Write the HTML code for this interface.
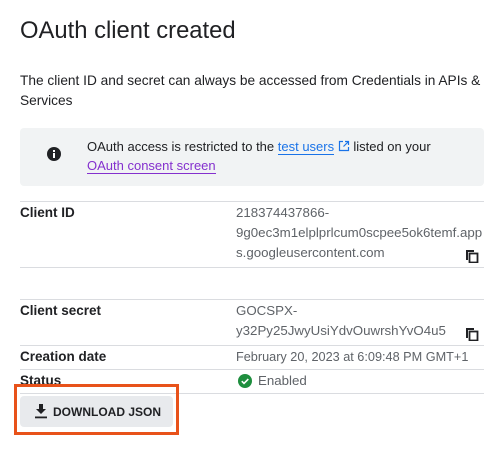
<!DOCTYPE html>
<html><head><style>
*{margin:0;padding:0;box-sizing:border-box}
body{width:497px;height:462px;background:#fff;font-family:"Liberation Sans",sans-serif;color:#202124;position:relative;overflow:hidden}
.a{position:absolute;white-space:nowrap}
.t{font-size:14px;line-height:20px}
.g{color:#5f6368;font-size:13.3px}
.hr{position:absolute;left:20px;width:464px;height:1px;background:#dadce0}
.b{font-weight:bold;font-size:13.5px}
</style></head><body>
<div class="a" style="left:20px;top:16px;font-size:23.8px;line-height:30px">OAuth client created</div>
<div class="a t" style="left:20px;top:71px;font-size:13.7px">The client ID and secret can always be accessed from Credentials in APIs &amp;</div>
<div class="a t" style="left:20px;top:91px;font-size:13.7px">Services</div>
<div class="a" style="left:20px;top:128px;width:464px;height:58px;background:#f1f3f4;border-radius:4px"></div>
<svg class="a" style="left:46px;top:146px" width="16" height="16" viewBox="0 0 16 16"><circle cx="8" cy="8" r="7" fill="#202124"/><rect x="7" y="7" width="2" height="5" fill="#fff"/><rect x="7" y="4" width="2" height="2" fill="#fff"/></svg>
<div class="a t" style="left:87px;top:137px;font-size:13px">OAuth access is restricted to the <span style="color:#1a73e8;border-bottom:1px solid #1a73e8">test users</span> <svg width="12" height="12" viewBox="0 0 12 12" style="vertical-align:-1px"><path d="M5 1.5H1.5v9h9V7M7 1.5h3.5V5M10.5 1.5 5.5 6.5" fill="none" stroke="#1a73e8" stroke-width="1.2"/></svg> listed on your</div>
<div class="a t" style="left:87px;top:156px;color:#8430ce;font-size:13px"><span style="border-bottom:1px solid #8430ce">OAuth consent screen</span></div>
<div class="hr" style="top:201px"></div>
<div class="a t b" style="left:20px;top:203px">Client ID</div>
<div class="a t g" style="left:236px;top:203px">218374437866-</div>
<div class="a t g" style="left:236px;top:223px">9g0ec3m1elplprlcum0scpee5ok6temf.app</div>
<div class="a t g" style="left:236px;top:243px">s.googleusercontent.com</div>
<svg class="a" style="left:465px;top:249px" width="14" height="14" viewBox="0 0 14 14"><path d="M1 1h8v2H3v8H1z" fill="#202124"/><rect x="4.5" y="4.5" width="8" height="9" fill="none" stroke="#202124" stroke-width="1.8"/></svg>
<div class="hr" style="top:267px"></div>
<div class="hr" style="top:299px"></div>
<div class="a t b" style="left:20px;top:301px">Client secret</div>
<div class="a t g" style="left:236px;top:301px">GOCSPX-</div>
<div class="a t g" style="left:236px;top:321px">y32Py25JwyUsiYdvOuwrshYvO4u5</div>
<svg class="a" style="left:465px;top:327px" width="14" height="14" viewBox="0 0 14 14"><path d="M1 1h8v2H3v8H1z" fill="#202124"/><rect x="4.5" y="4.5" width="8" height="9" fill="none" stroke="#202124" stroke-width="1.8"/></svg>
<div class="hr" style="top:345px"></div>
<div class="a t b" style="left:20px;top:347px">Creation date</div>
<div class="a t g" style="left:236px;top:347px;font-size:12.7px">February 20, 2023 at 6:09:48 PM GMT+1</div>
<div class="hr" style="top:369px"></div>
<div class="a t b" style="left:20px;top:371px">Status</div>
<svg class="a" style="left:238px;top:374px" width="14" height="14" viewBox="0 0 14 14"><circle cx="7" cy="7" r="7" fill="#1e8e3e"/><path d="M3.8 7.2l2.2 2.2 4.3-4.3" fill="none" stroke="#fff" stroke-width="1.6"/></svg>
<div class="a t g" style="left:258px;top:371px">Enabled</div>
<div class="hr" style="top:393px"></div>
<div class="a" style="left:14px;top:384px;width:165px;height:51px;border:3px solid #e8521a"></div>
<div class="a" style="left:20px;top:396px;width:153px;height:31px;background:#e8eaed;border-radius:4px"></div>
<svg class="a" style="left:34px;top:404px" width="14" height="15" viewBox="0 0 14 15"><path d="M5 0h4v5h3L7 10 2 5h3z" fill="#202124"/><rect x="1" y="12.5" width="12" height="1.8" fill="#202124"/></svg>
<div class="a b" style="left:53px;top:404px;font-size:12px;line-height:16px">DOWNLOAD JSON</div>
</body></html>
